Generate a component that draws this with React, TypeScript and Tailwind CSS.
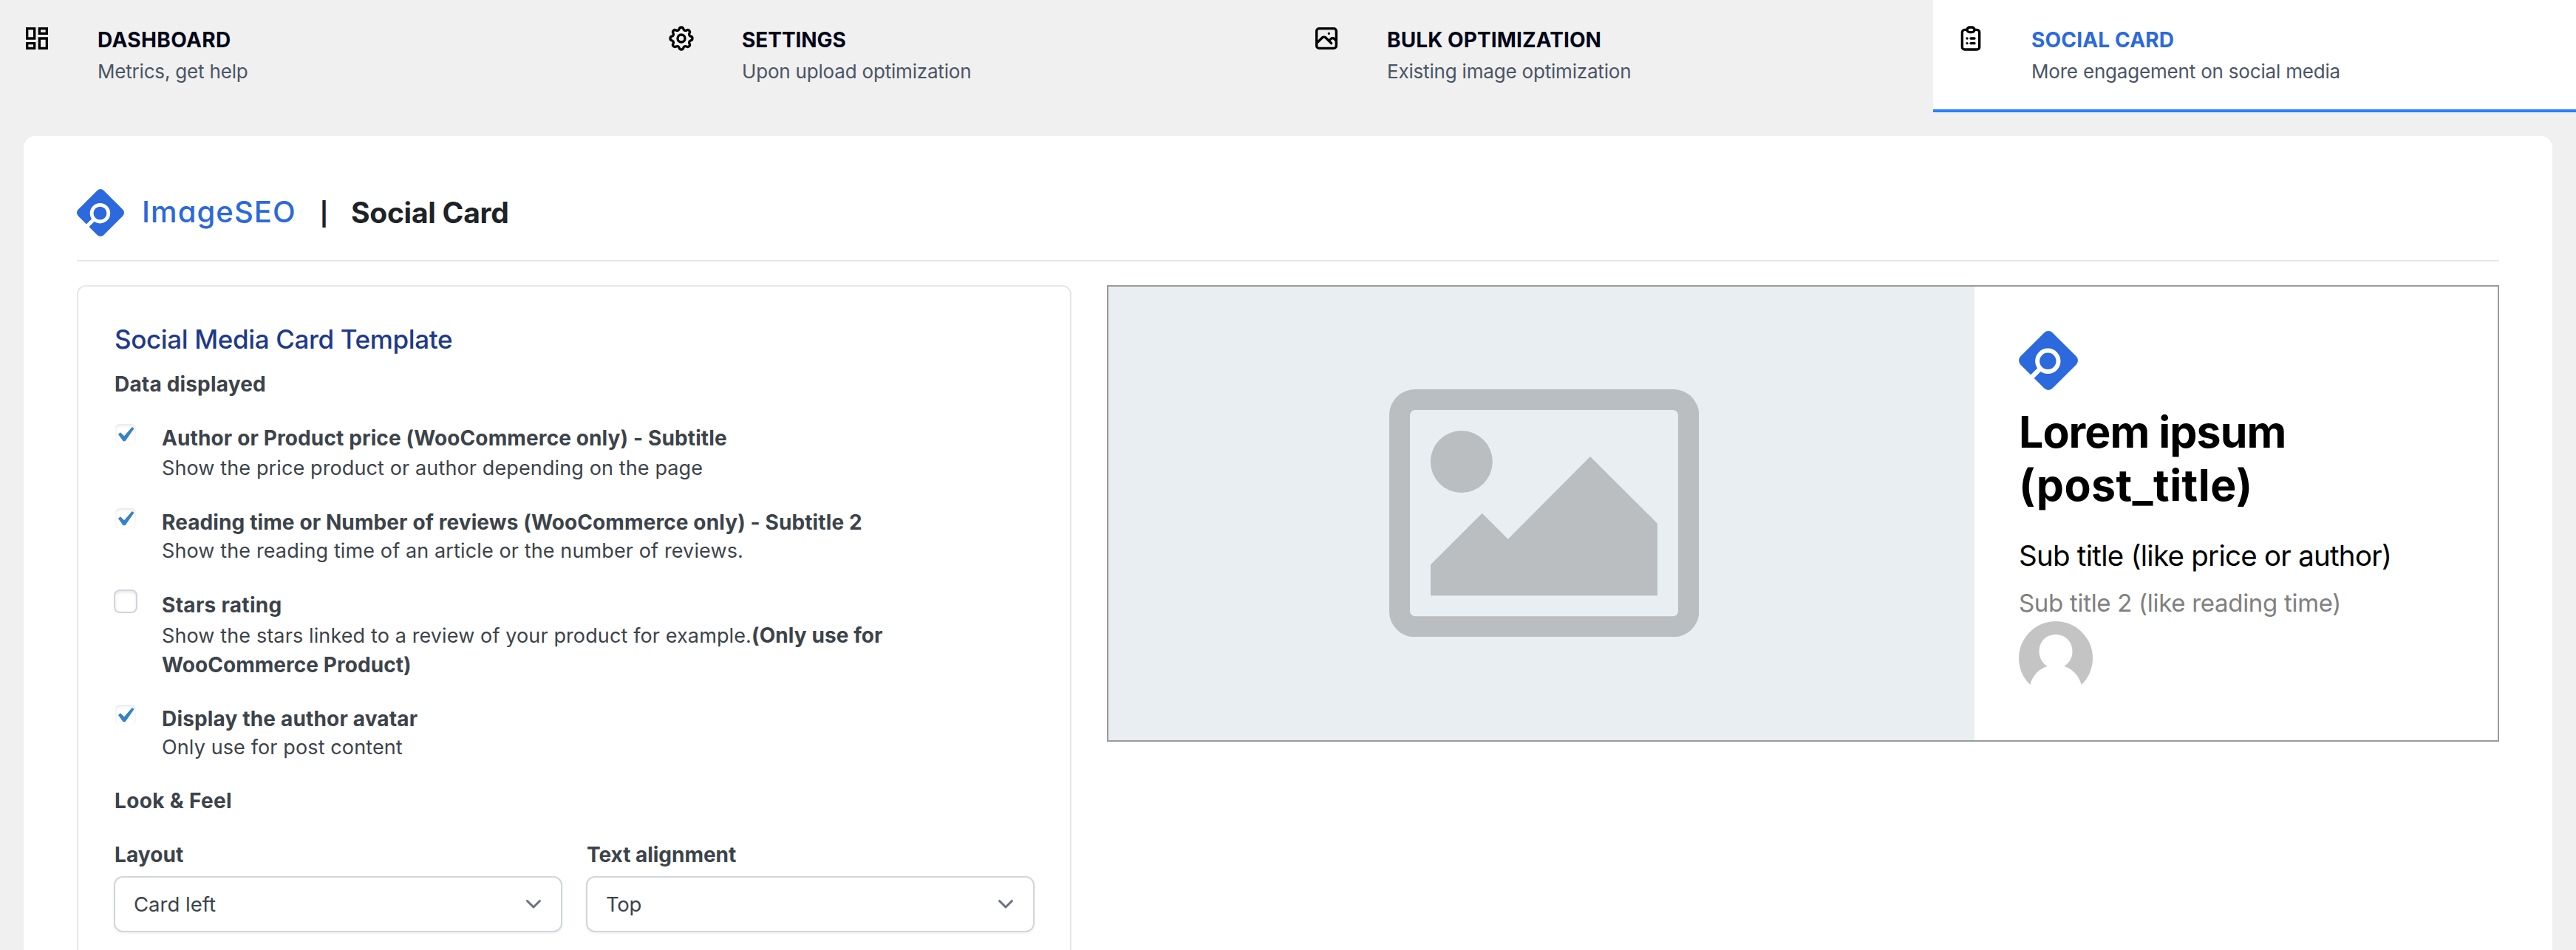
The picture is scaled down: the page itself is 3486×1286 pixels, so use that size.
import React from 'react';

const STROKE_ICONS = {
  cog: 'M10.325 4.317c.426-1.756 2.924-1.756 3.35 0a1.724 1.724 0 002.573 1.066c1.543-.94 3.31.826 2.37 2.37a1.724 1.724 0 001.065 2.572c1.756.426 1.756 2.924 0 3.35a1.724 1.724 0 00-1.066 2.573c.94 1.543-.826 3.31-2.37 2.37a1.724 1.724 0 00-2.572 1.065c-.426 1.756-2.924 1.756-3.35 0a1.724 1.724 0 00-2.573-1.066c-1.543.94-3.31-.826-2.37-2.37a1.724 1.724 0 00-1.065-2.572c-1.756-.426-1.756-2.924 0-3.35a1.724 1.724 0 001.066-2.573c-.94-1.543.826-3.31 2.37-2.37.996.608 2.296.07 2.572-1.065z M15 12a3 3 0 11-6 0 3 3 0 016 0z',
  photo:
    'M4 16l4.586-4.586a2 2 0 012.828 0L16 16m-2-2l1.586-1.586a2 2 0 012.828 0L20 14m-6-6h.01M6 20h12a2 2 0 002-2V6a2 2 0 00-2-2H6a2 2 0 00-2 2v12a2 2 0 002 2z',
  clipboard:
    'M9 5H7a2 2 0 00-2 2v12a2 2 0 002 2h10a2 2 0 002-2V7a2 2 0 00-2-2h-2M9 5a2 2 0 002 2h2a2 2 0 002-2M9 5a2 2 0 012-2h2a2 2 0 012 2m-3 7h3m-3 4h3m-6-4h.01M9 16h.01',
};

function StrokeIcon({ name }: { name: keyof typeof STROKE_ICONS }) {
  return (
    <svg className="size-10" viewBox="0 0 24 24" fill="none" stroke="#000" strokeWidth="2" strokeLinecap="round" strokeLinejoin="round">
      <path d={STROKE_ICONS[name]} />
    </svg>
  );
}

function DashboardIcon() {
  return (
    <svg className="size-10" viewBox="0 0 24 24" fill="#000">
      <path d="M19 5v2h-4V5h4M9 5v6H5V5h4m10 8v6h-4v-6h4M9 17v2H5v-2h4M21 3h-8v6h8V3zM11 3H3v10h8V3zm10 8h-8v10h8V11zm-10 4H3v6h8v-6z" />
    </svg>
  );
}

function Logo({ className }: { className: string }) {
  return (
    <svg className={className} viewBox="0 0 80 80" fill="none">
      <rect x="9.4" y="9.4" width="61.2" height="61.2" rx="8" fill="#2b69dd" transform="rotate(45 40 40)" />
      <circle cx="39.3" cy="40.8" r="14.2" stroke="#fff" strokeWidth="6" />
      <path d="M14 66L29 51" stroke="#fff" strokeWidth="6.4" />
    </svg>
  );
}

const TABS = [
  { title: 'DASHBOARD', sub: 'Metrics, get help', icon: <DashboardIcon />, track: 'tracking-[0.38px]', pad: 'pl-[30px]' },
  { title: 'SETTINGS', sub: 'Upon upload optimization', icon: <StrokeIcon name="cog" />, track: 'tracking-[-0.05px]', pad: 'pl-[30px]' },
  { title: 'BULK OPTIMIZATION', sub: 'Existing image optimization', icon: <StrokeIcon name="photo" />, track: 'tracking-[0.1px]', pad: 'pl-[31px]' },
  { title: 'SOCIAL CARD', sub: 'More engagement on social media', icon: <StrokeIcon name="clipboard" />, track: 'tracking-[0.17px]', pad: 'pl-[31px]', active: true },
];

function Tabs() {
  return (
    <nav className="flex h-[152px]">
      {TABS.map((t) => (
        <a
          key={t.title}
          className={
            'flex items-start border-b-4 ' +
            t.pad +
            (t.active ? ' flex-1 border-blue-500 bg-white' : ' w-[872px] shrink-0 border-transparent')
          }
        >
          <span className="mt-8 mr-[62px]">{t.icon}</span>
          <span className="mt-[34px] flex flex-col whitespace-nowrap">
            <span className={'text-[28px] leading-10 font-bold ' + t.track + (t.active ? ' text-[#2b69dd]' : ' text-[#020617]')}>{t.title}</span>
            <span className="mt-[5px] text-[26px] leading-9 tracking-[-0.19px] text-gray-600">{t.sub}</span>
          </span>
        </a>
      ))}
    </nav>
  );
}

const OPTIONS = [
  {
    title: 'Author or Product price (WooCommerce only) - Subtitle',
    text: 'Show the price product or author depending on the page',
    checked: true,
    titleClass: 'h-[41px] tracking-[0.12px]',
  },
  {
    title: 'Reading time or Number of reviews (WooCommerce only) - Subtitle 2',
    text: 'Show the reading time of an article or the number of reviews.',
    checked: true,
    titleClass: 'h-[39px] tracking-[0.11px]',
  },
  {
    title: 'Stars rating',
    text: 'Show the stars linked to a review of your product for example.',
    strong: ['(Only use for', 'WooCommerce Product)'],
    checked: false,
    titleClass: 'h-[41px] tracking-[0.3px]',
  },
  {
    title: 'Display the author avatar',
    text: 'Only use for post content',
    checked: true,
    titleClass: 'h-[39px] tracking-[0.16px]',
  },
];

function Checkbox({ checked }: { checked: boolean }) {
  return (
    <span
      className={
        '-mt-px mr-[33px] flex size-8 shrink-0 items-center justify-center rounded-lg border-2 bg-clip-padding shadow-[inset_0_2px_4px_rgba(0,0,0,0.1)] ' +
        (checked ? 'border-transparent' : 'border-gray-300')
      }
    >
      {checked && (
        <svg className="ml-[2px] h-[19.3px] w-[21.5px] shrink-0" viewBox="5.78 4.89 10.39 9.32" fill="#3582c4">
          <path d="M14.83 4.89l1.34.94-5.81 8.38H9.02L5.78 9.67l1.34-1.25 2.57 2.4z" />
        </svg>
      )}
    </span>
  );
}

function Select({ label, value, track, valueTrack }: { label: string; value: string; track: string; valueTrack: string }) {
  return (
    <div>
      <div className={'ml-px text-[28px] leading-10 font-bold ' + track}>{label}</div>
      <div className="mt-[9px] flex h-[76px] items-center justify-between rounded-xl border-2 border-gray-300 pr-[25px] pl-[25px] shadow-[0_2px_4px_rgba(0,0,0,0.05)]">
        <span className={'text-[27.5px] leading-10 ' + valueTrack}>{value}</span>
        <svg className="-mt-px h-4 w-6" viewBox="0 0 24 16" fill="none" stroke="#6b7280" strokeWidth="3" strokeLinecap="round" strokeLinejoin="round">
          <path d="M3.5 3.5L12 12L20.5 3.5" />
        </svg>
      </div>
    </div>
  );
}

function SettingsPanel() {
  return (
    <section className="h-[940px] w-[1346px] shrink-0 rounded-xl border-2 border-gray-200 px-12 pt-[47px] text-[#3c434a]">
      <h2 className="ml-px text-[35px] leading-12 font-medium tracking-[-0.36px] text-[#1e3a8a]">Social Media Card Template</h2>
      <h3 className="mt-[17px] ml-px text-[28px] leading-10 font-bold tracking-[0.18px]">Data displayed</h3>
      <div className="mt-[33px] flex flex-col gap-[33px]">
        {OPTIONS.map((o) => (
          <div key={o.title} className="flex">
            <Checkbox checked={o.checked} />
            <div className="w-[1010px]">
              <div className={'text-[28px] leading-10 font-bold whitespace-nowrap ' + o.titleClass}>{o.title}</div>
              <div className="flex h-10 items-baseline whitespace-nowrap text-[27px] leading-10 tracking-[0.12px]">
                <span>{o.text}</span>
                {o.strong && <strong className="text-[28px] font-bold tracking-[0.08px]">{o.strong[0]}</strong>}
              </div>
              {o.strong && <strong className="block text-[28px] leading-10 font-bold tracking-[0.05px]">{o.strong[1]}</strong>}
            </div>
          </div>
        ))}
      </div>
      <h3 className="mt-8 ml-px text-[28px] leading-10 font-bold tracking-[0.35px]">Look &amp; Feel</h3>
      <div className="mt-[33px] grid grid-cols-2 gap-8">
        <Select label="Layout" value="Card left" track="tracking-[0.09px]" valueTrack="tracking-[0px]" />
        <Select label="Text alignment" value="Top" track="tracking-[-0.03px]" valueTrack="tracking-[-0.3px]" />
      </div>
    </section>
  );
}

function PlaceholderImage() {
  return (
    <svg className="ml-[380px] h-[335.3px] w-[419.3px]" viewBox="119 110 1258 1006" fill="#babec1">
      <path
        fillRule="evenodd"
        d="M223 110H1273A104 104 0 0 1 1377 214V1012A104 104 0 0 1 1273 1116H223A104 104 0 0 1 119 1012V214A104 104 0 0 1 223 110ZM224 194A21 21 0 0 0 203 215V1011A21 21 0 0 0 224 1032H1271A21 21 0 0 0 1292 1011V215A21 21 0 0 0 1271 194Z"
      />
      <circle cx="412.5" cy="404" r="126" />
      <path d="M287 822L496 613L601 718L935 383L1208 655V948H287Z" />
    </svg>
  );
}

function Avatar() {
  return (
    <svg className="mt-[5px] size-[100px]" viewBox="0 0 100 100">
      <circle cx="50" cy="50" r="50" fill="#c4c4c4" />
      <path
        fill="#fff"
        d="M50 18C63 18 72.5 27.500 72.500 41C72.500 49.500 68 56.500 61.500 61C73 64.500 82 74 85 87V100H15V87C18 74 27 64.500 38.500 61C32 56.500 27.500 49.500 27.500 41C27.500 27.500 37 18 50 18Z"
      />
    </svg>
  );
}

function Preview() {
  return (
    <section className="flex h-[618px] flex-1 border-2 border-[#999b9d]">
      <div className="flex w-[1172px] shrink-0 items-center bg-[#e8eef2] pb-px">
        <PlaceholderImage />
      </div>
      <div className="flex-1 pt-[60px] pl-[60px] text-black">
        <Logo className="size-20" />
        <div className="mt-[21px] text-[59px] leading-[72px] font-bold">
          <div className="tracking-[-0.96px]">Lorem ipsum</div>
          <div className="tracking-[0.45px]">(post_title)</div>
        </div>
        <div className="mt-[35px] text-[38.5px] leading-12 tracking-[-0.75px]">Sub title (like price or author)</div>
        <div className="mt-5 text-[33px] leading-10 tracking-[-0.3px] text-[#808080]">Sub title 2 (like reading time)</div>
        <Avatar />
      </div>
    </section>
  );
}

export default function App() {
  return (
    <div className="h-[1286px] overflow-hidden bg-[#f0f0f0] font-['Inter',sans-serif]">
      <Tabs />
      <main className="mx-8 mt-8 h-[1200px] rounded-2xl bg-white px-[72px] pt-[72px]">
        <header className="flex h-[98px] items-start border-b-2 border-gray-200">
          <div className="flex h-16 items-center whitespace-nowrap">
            <Logo className="size-16" />
            <span className="-mt-[3px] ml-6 w-[206px] text-[40px] leading-12 font-medium tracking-[1.1px] text-[#2b69dd] [font-feature-settings:'cv11']">ImageSEO</span>
            <span className="mt-[3px] w-[81px] text-center text-[31px] leading-12 font-bold text-[#1d2327]">|</span>
            <h1 className="-ml-[4px] text-[39px] leading-12 font-bold tracking-[-0.26px] text-[#1d2327]">Social Card</h1>
          </div>
        </header>
        <div className="mt-8 flex items-start gap-12">
          <SettingsPanel />
          <Preview />
        </div>
      </main>
    </div>
  );
}
